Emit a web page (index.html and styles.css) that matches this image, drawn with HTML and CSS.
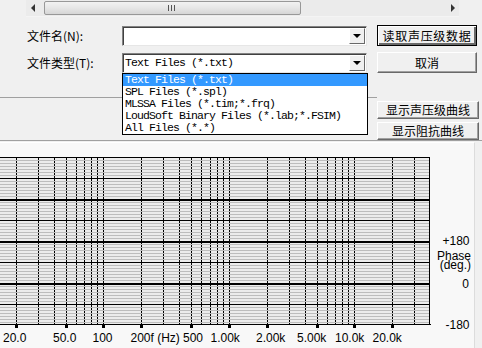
FILE: index.html
```html
<!DOCTYPE html>
<html lang="zh-CN">
<head>
    <meta charset="UTF-8">
    <title>读取声压级数据</title>
    <link rel="stylesheet" href="styles.css">
</head>
<body>
    <div class="hscroll">
        <span class="arrow arrow-left"></span>
        <div class="track">
            <div class="thumb"><span class="grip"></span></div>
        </div>
        <span class="arrow arrow-right"></span>
    </div>

    <div class="file-form">
        <label class="field-label">文件名(N):</label>
        <div class="combo">
            <span class="combo-value"></span>
            <span class="combo-btn"></span>
        </div>
        <button class="btn btn-default">读取声压级数据</button>

        <label class="field-label">文件类型(T):</label>
        <div class="combo combo-open">
            <span class="combo-value">Text Files (*.txt)</span>
            <span class="combo-btn"></span>
            <ul class="drop-list">
                <li class="selected">Text Files (*.txt)</li>
                <li>SPL Files (*.spl)</li>
                <li>MLSSA Files (*.tim;*.frq)</li>
                <li>LoudSoft Binary Files (*.lab;*.FSIM)</li>
                <li>All Files (*.*)</li>
            </ul>
        </div>
        <button class="btn">取消</button>
    </div>

    <div class="view-bar">
        <div class="view-left"></div>
        <div class="view-buttons">
            <button class="btn btn-small">显示声压级曲线</button>
            <button class="btn btn-small">显示阻抗曲线</button>
        </div>
    </div>

    <div class="chart-panel">
        <svg class="chart" width="474" height="205" viewBox="0 143 474 205">
            <defs>
                <pattern id="minor" x="0" y="157" width="10" height="3" patternUnits="userSpaceOnUse">
                    <rect x="0" y="0" width="10" height="1" fill="#bdbdbd"/>
                </pattern>
            </defs>
            <rect x="0" y="157" width="430" height="167" fill="#ececec"/>
            <!-- frequency lines 20 Hz .. 30 kHz -->
            <path stroke="#000" stroke-width="1" d="
                M16.5 157V324 M38.5 157V324 M54.5 157V324 M66.5 157V324 M76.5 157V324
                M84.5 157V324 M91.5 157V324 M97.5 157V324 M103.5 157V324
                M141.5 157V324 M163.5 157V324 M179.5 157V324 M191.5 157V324 M201.5 157V324
                M210.5 157V324 M217.5 157V324 M223.5 157V324 M229.5 157V324
                M267.5 157V324 M289.5 157V324 M305.5 157V324 M317.5 157V324 M327.5 157V324
                M335.5 157V324 M342.5 157V324 M348.5 157V324 M354.5 157V324
                M392.5 157V324 M414.5 157V324"/>
            <rect x="0" y="159" width="430" height="165" fill="url(#minor)"/>
            <!-- level lines -->
            <g fill="#000">
                <rect x="0" y="157" width="430" height="1"/>
                <rect x="0" y="178" width="430" height="1"/>
                <rect x="0" y="199" width="430" height="2"/>
                <rect x="0" y="220" width="430" height="1"/>
                <rect x="0" y="241" width="430" height="2"/>
                <rect x="0" y="262" width="430" height="1"/>
                <rect x="0" y="283" width="430" height="2"/>
                <rect x="0" y="304" width="430" height="1"/>
                <rect x="0" y="324" width="431" height="1"/>
                <rect x="429" y="157" width="1" height="168"/>
                <!-- ticks -->
                <rect x="15" y="324" width="3" height="4"/>
                <rect x="65" y="324" width="3" height="4"/>
                <rect x="102" y="324" width="3" height="4"/>
                <rect x="140" y="324" width="3" height="4"/>
                <rect x="190" y="324" width="3" height="4"/>
                <rect x="228" y="324" width="3" height="4"/>
                <rect x="266" y="324" width="3" height="4"/>
                <rect x="316" y="324" width="3" height="4"/>
                <rect x="353" y="324" width="3" height="4"/>
                <rect x="391" y="324" width="3" height="4"/>
            </g>
            <g class="axis-text">
                <text x="3" y="342">20.0</text>
                <text x="53" y="342">50.0</text>
                <text x="92.5" y="342">100</text>
                <text x="130.5" y="342">200</text>
                <text x="150.5" y="342">f (Hz)</text>
                <text x="183" y="342">500</text>
                <text x="210.5" y="342">1.00k</text>
                <text x="256" y="342">2.00k</text>
                <text x="297" y="342">5.00k</text>
                <text x="335" y="342">10.0k</text>
                <text x="372.5" y="342">20.0k</text>
            </g>
            <g class="axis-text phase">
                <text x="469.5" y="245">+180</text>
                <text x="471" y="259.5">Phase</text>
                <text x="471" y="269">(deg.)</text>
                <text x="469" y="287.5">0</text>
                <text x="469.5" y="328.5">-180</text>
            </g>
        </svg>
    </div>
</body>
</html>
```

FILE: styles.css
```css
* {
    margin: 0;
    padding: 0;
    box-sizing: border-box;
}

body {
    width: 482px;
    height: 348px;
    overflow: hidden;
    background: #f0f0f0;
    font-family: "Noto Sans CJK SC", sans-serif;
    font-size: 12px;
    color: #000;
}

/* horizontal scroll bar */
.hscroll {
    display: flex;
    align-items: center;
    width: 433px;
    height: 17px;
    margin-left: 26px;
    background: #ebebeb;
    border-bottom: 1px solid #f4f4f4;
}

.arrow {
    width: 17px;
    height: 16px;
    position: relative;
}

.arrow::after {
    content: "";
    position: absolute;
    top: 4px;
    border-top: 4px solid transparent;
    border-bottom: 4px solid transparent;
}

.arrow-left::after {
    left: 5px;
    border-right: 4px solid #333;
}

.arrow-right::after {
    left: 9px;
    border-left: 4px solid #333;
}

.track {
    flex: 1;
    height: 16px;
    padding: 1px 0;
}

.thumb {
    width: 257px;
    height: 14px;
    margin-left: 1px;
    border: 1px solid #989898;
    border-radius: 2px;
    background: linear-gradient(#f2f2f2 0%, #e6e6e6 50%, #d6d6d6 100%);
    display: flex;
    align-items: center;
    justify-content: center;
}

.grip {
    width: 7px;
    height: 6px;
    margin-left: -2px;
    background: linear-gradient(90deg, #555 1px, transparent 1px, transparent 3px, #555 3px, #555 4px, transparent 4px, transparent 6px, #555 6px);
}

/* file name / type rows */
.file-form {
    display: grid;
    grid-template-columns: 85px 245px 100px;
    grid-auto-rows: 21px;
    column-gap: 10px;
    row-gap: 6px;
    padding: 8px 0 0 27px;
    align-items: center;
}

.field-label {
    font-size: 12px;
    line-height: 14px;
    padding-top: 1px;
    white-space: nowrap;
}

.combo {
    position: relative;
    height: 20px;
    background: #fff;
    border: 1px solid;
    border-color: #828282 #e6e6e6 #e6e6e6 #828282;
    box-shadow: inset 1px 1px 0 #404040;
    display: flex;
    align-items: center;
}

.combo-value {
    flex: 1;
    padding-left: 2px;
    font-family: "Liberation Mono", monospace;
    font-size: 11.5px;
    letter-spacing: -0.9px;
    white-space: nowrap;
}

.combo-btn {
    position: relative;
    width: 16px;
    height: 16px;
    margin-right: 1px;
    background: #f0f0f0;
    border: 1px solid;
    border-color: #fff #696969 #696969 #fff;
}

.combo-btn::after {
    content: "";
    position: absolute;
    left: 3px;
    top: 5px;
    border-left: 4px solid transparent;
    border-right: 4px solid transparent;
    border-top: 4px solid #000;
}

.drop-list {
    position: absolute;
    left: -1px;
    top: 19px;
    width: 246px;
    list-style: none;
    background: #fff;
    border: 1px solid #000;
    z-index: 2;
}

.drop-list li {
    height: 12px;
    line-height: 12px;
    padding-left: 2px;
    font-family: "Liberation Mono", monospace;
    font-size: 11.5px;
    letter-spacing: -0.9px;
    white-space: nowrap;
}

.drop-list li.selected {
    background: #3399ff;
    color: #fff;
}

/* push buttons */
.btn {
    height: 21px;
    font-family: "Noto Sans CJK SC", sans-serif;
    font-size: 12px;
    color: #000;
    background: #f0f0f0;
    border: 1px solid;
    border-color: #fff #696969 #696969 #fff;
    box-shadow: inset -1px -1px 0 #a0a0a0;
    cursor: pointer;
}

.btn-default {
    letter-spacing: 0.7px;
    border-color: #000;
    box-shadow: inset 1px 1px 0 #fff, inset -2px -2px 0 #696969;
}

.view-bar {
    display: flex;
    height: 68px;
    border-bottom: 1px solid #a0a0a0;
}

.view-left {
    width: 377px;
    margin-top: 24px;
    border-top: 1px solid #a0a0a0;
}

.view-buttons {
    display: flex;
    flex-direction: column;
    gap: 3px;
    padding-top: 28px;
}

.btn-small {
    width: 102px;
    height: 18px;
    line-height: 14px;
}

.chart-panel {
    width: 475px;
    height: 206px;
    margin-top: 1px;
    background: #f8f8f8;
    border-top: 1px solid #fff;
    border-right: 1px solid #dcdcdc;
}

.chart {
    display: block;
}

.axis-text text {
    font-family: "Liberation Sans", Arial, sans-serif;
    font-size: 12px;
    fill: #000;
}

.phase text {
    text-anchor: end;
}
```
